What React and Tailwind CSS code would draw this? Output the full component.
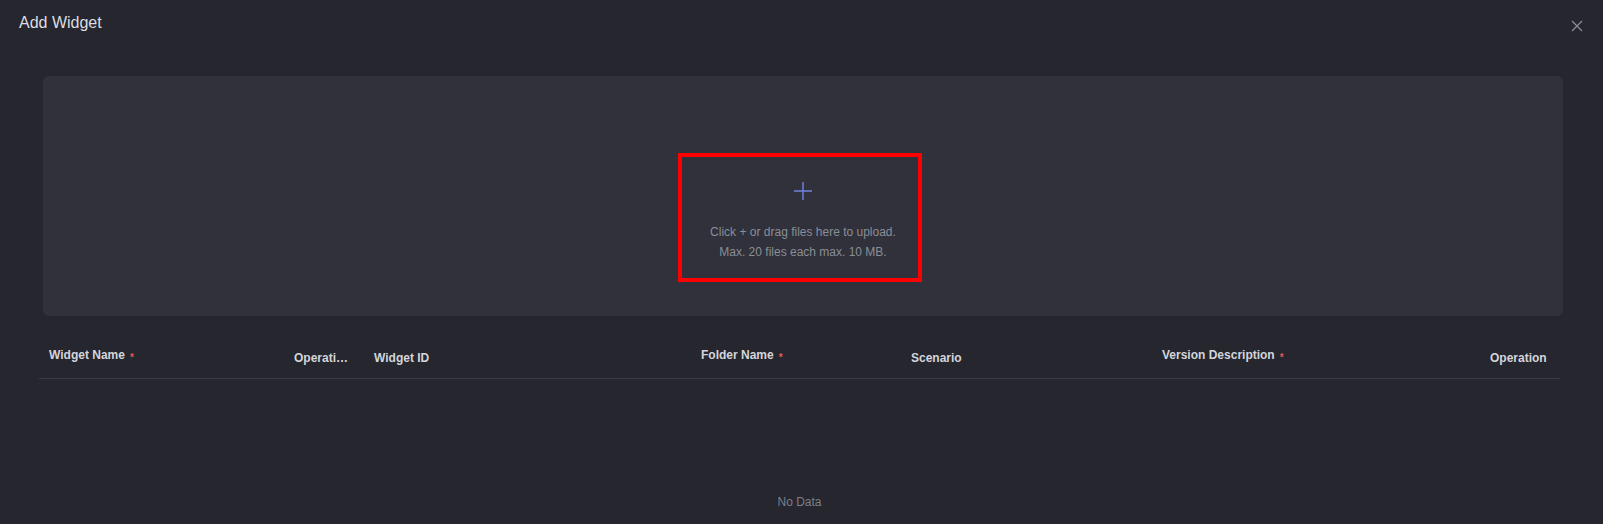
import React from "react";

const cols = [
  { label: "Widget Name", req: true },
  { label: "Operation", req: false, trunc: true },
  { label: "Widget ID", req: false },
  { label: "Folder Name", req: true },
  { label: "Scenario", req: false },
  { label: "Version Description", req: true },
  { label: "Operation", req: false },
];

export default function App() {
  return (
    <div className="w-full h-[524px] overflow-hidden bg-[#25262e] font-['Liberation_Sans',Arial,sans-serif]">
      {/* Header */}
      <div className="flex items-start justify-between pl-[19px] pr-[20px] pt-[11px]">
        <div className="h-6 leading-6 text-[16px] text-[#dcdde2]">Add Widget</div>
        <button className="mt-[9px] w-[12px] h-[12px] flex items-center justify-center text-[#8d8f98]">
          <svg width="12" height="12" viewBox="0 0 12 12" fill="none" stroke="currentColor" strokeWidth="1.2">
            <path d="M1 1 L11 11 M11 1 L1 11" />
          </svg>
        </button>
      </div>

      {/* Upload area */}
      <div className="ml-[43px] mr-[40px] mt-[41px] h-[240px] rounded-[6px] bg-[#30313a] flex justify-center pt-[77px]">
        <div className="mr-[6px] w-[244px] h-[129px] border-4 border-[#ff0000] flex flex-col items-center pt-[25px] pl-[6px]">
          <svg width="18" height="18" viewBox="0 0 18 18" fill="none" stroke="#6f83e0" strokeWidth="1.4">
            <path d="M0 9 H18 M9 0 V18" />
          </svg>
          <div className="mt-[22px] text-[12px] leading-[20px] text-[#8b8d97] text-center whitespace-nowrap">
            <div>Click + or drag files here to upload.</div>
            <div>Max. 20 files each max. 10 MB.</div>
          </div>
        </div>
      </div>

      {/* Table */}
      <div className="ml-[39px] w-[1521px] mt-[18px]">
        <div className="grid grid-cols-[245px_80px_327px_210px_251px_328px_80px] h-[45px] border-b border-[#3a3b44]">
          {cols.map((c, i) => (
            <div
              key={i}
              className={`flex items-center px-[10px] text-[12px] leading-[20px] font-bold text-[#d4d5db] ${
                c.req ? "pb-[2px]" : "pt-[3px]"
              }`}
            >
              {c.trunc ? (
                <div className="w-[55px] truncate whitespace-nowrap">{c.label}</div>
              ) : (
                <span className="whitespace-nowrap">{c.label}</span>
              )}
              {c.req && (
                <span className="ml-[5px] mt-[6px] text-[10px] leading-none text-[#e05858]">*</span>
              )}
            </div>
          ))}
        </div>
        <div className="pt-[113px] text-center text-[12px] leading-[20px] text-[#7d7f89]">No Data</div>
      </div>
    </div>
  );
}
